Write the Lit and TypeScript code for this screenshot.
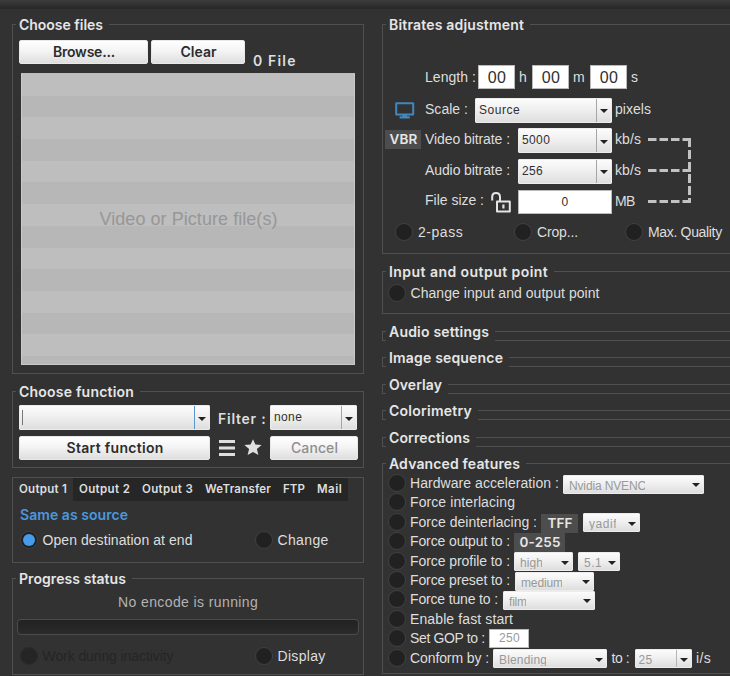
import { LitElement, html, css, svg } from "lit";
import { customElement, property } from "lit/decorators.js";

/** One line of text whose letter spacing is tuned so that it fills `w` pixels. */
@customElement("fit-label")
class FitLabel extends LitElement {
  @property({ type: Number }) w = 0;
  @property() text = "";
  static styles = css`
    :host { display: block; white-space: pre; }
    span { display: inline-block; }
  `;
  render() {
    return html`<span>${this.text}</span>`;
  }
  updated() {
    const s = this.renderRoot.querySelector("span") as HTMLElement;
    s.style.letterSpacing = "0px";
    const natural = s.getBoundingClientRect().width;
    const n = this.text.length;
    if (this.w && n > 1) s.style.letterSpacing = ((this.w + 1 - natural) / (n - 0.5)).toFixed(3) + "px";
    this.style.width = this.w + "px";
  }
}

const t = (text: string, w: number, cls = "") =>
  html`<fit-label class=${cls} .text=${text} .w=${w}></fit-label>`;

@customElement("app-root")
export class AppRoot extends LitElement {
  static styles = css`
    :host {
      display: block; width: 730px; height: 676px; overflow: hidden;
      background: #323232; color: #dedede;
      font: 14px/18px "Liberation Sans", Arial, sans-serif;
      box-sizing: border-box;
    }
    * { box-sizing: border-box; }
    .titlebar { height: 9px; background: linear-gradient(#3d3d3d, #292929); border-bottom: 1px solid #292929; }
    .main { display: grid; grid-template-columns: 352px 360px; column-gap: 18px; padding-left: 12px; height: 666px; }
    .col { display: flex; flex-direction: column; padding-top: 15px; }
    .group { border: 1px solid #505050; display: flex; flex-direction: column; flex: none; }
    .legend {
      height: 18px; margin: -9px 0 0 3px; padding: 0 7px 0 3px; align-self: flex-start;
      background: #323232; font: 600 14px/18px Inter, "Open Sans", sans-serif; color: #e6e6e6; flex: none;
    }
    .files { height: 350px; }
    .function { height: 77px; margin-top: 17px; }
    .output { height: 86px; margin-top: 9px; }
    .progress { height: 97px; margin-top: 15px; }
    .bitrates { height: 230px; }
    .points { height: 43px; margin-top: 17px; }
    .slim { height: 10px; margin-top: 16.4px; }
    .slim.first { margin-top: 17px; }
    .advanced { height: 211px; margin-top: 16.4px; }
    .row { display: grid; align-items: start; flex: none; }

    .btn {
      height: 24px; border-radius: 2px; background: linear-gradient(#fff, #f4f4f4 45%, #dedede);
      color: #2c2c2c; font: 600 14px/22px Inter, "Open Sans", sans-serif;
      display: flex; justify-content: center; border: 1px solid #e8e8e8;
    }
    .btn.off { color: #8f8f8f; font-weight: 500; }
    .inter { font-family: Inter, "Open Sans", sans-serif; font-weight: 600; }
    .combo {
      display: flex; height: 25px; border-radius: 1px; border: 1px solid #ececec;
      background: linear-gradient(#fcfcfc, #f0f0f0 45%, #dedede); color: #303030;
      font-size: 12px; line-height: 23px; padding-left: 3px;
    }
    .combo .arrow { margin-left: auto; width: 15px; display: flex; align-items: center; justify-content: center; border-left: 1px solid #a5a5a5; }
    .arrow::before { content: ""; border: 4px solid transparent; border-top: 4px solid #222; border-bottom: 0; margin-top: 2px; }
    .combo.focus .arrow { border-left-color: #5b93cb; }
    .caret { width: 1px; height: 15px; margin: 4px 0 0 -1px; background: #777; }
    .combo.small { height: 19px; line-height: 21px; color: #999; padding-left: 5px; overflow: hidden; }
    .small fit-label { height: 16px; overflow: hidden; }
    .small .arrow { border-left: 0; }
    .combo.split { padding-left: 3px; }
    .combo.split .arrow { border-left: 1px solid #b5b5b5; }
    .field { background: #fff; border: 1px solid #bbb; height: 24px; color: #303030; display: flex; justify-content: center; line-height: 23px; font-size: 16px; }
    .gop { width: 40px; height: 19px; margin: 1px 0 0 5px; color: #999; font-size: 12px; line-height: 17px; }
    .badge { background: #4d4d4d; height: 19px; display: flex; justify-content: center; font: 600 13.5px/19px Inter, sans-serif; color: #e6e6e6; }

    .radio { width: 18px; height: 18px; border-radius: 50%; background: #212121; border: 1.5px solid #414141; display: flex; align-items: center; justify-content: center; }
    .radio.on::before { content: ""; width: 12px; height: 12px; border-radius: 50%; background: #459cea; }
    .radio.dim { border-color: #2a2a2a; background: #252525; }

    .r-btns { grid-template-columns: 129px 94px 43px; column-gap: 3px; height: 29px; margin: 6px 0 0 6px; }
    .count { margin: 12px 0 0 5px; }
    .list {
      width: 334px; height: 292px; margin: 4px 0 0 8px; padding-top: 135px;
      background: repeating-linear-gradient(#bebebe 0 21.7px, #b7b7b7 21.7px 43.4px);
      border: 1px solid #c9c9c9; border-top-color: #bbb; display: flex; justify-content: center;
      color: #979797; font-size: 18px; line-height: 20px;
    }
    .r-fn { grid-template-columns: 191px 52px 87px; column-gap: 8px; margin: 4px 0 0 6px; }
    .filter { margin-top: 5px; }
    .r-fn2 { grid-template-columns: 191px 16px 18px 87px; column-gap: 9px; margin: 6px 0 0 6px; }
    .r-fn2 .off { margin-left: -1px; }
    svg { display: block; }
    .i-menu { margin-top: 4px; }
    .i-star { margin-top: 3px; }

    .tabs { display: flex; height: 23px; font: 600 11.5px/23px Inter, sans-serif; }
    .tab { padding-left: 6px; height: 23px; background: #262626; }
    .tab.active { width: 60px; background: none; }
    .tab + .tab { padding-right: 7px; }
    .same { color: #4a98de; margin: 5px 0 0 7px; }
    .r-opt { grid-template-columns: 18px 217px 18px 60px; margin-left: 6.5px; }
    .r-opt > :nth-child(2n) { margin-left: 5px; }
    .o1 { margin-top: 7px; }
    .status { color: #b2b2b2; margin: 5px 0 0 105px; }
    .bar { height: 16px; margin: 8px 4px 0 4px; border: 1px solid #4c4c4c; border-radius: 4px; background: linear-gradient(#222, #2b2b2b); }
    .o2 { margin-top: 12px; }
    .dimtext { color: #252525; }

    .body { display: grid; grid-template-columns: 264px 60px; }
    .r-len { grid-template-columns: 53px 37px 17px 37px 21px 37px 20px; margin: 31px 0 0 42px; }
    .r-len > :nth-child(odd) { padding-top: 3px; }
    .r-len > :nth-child(3), .r-len > :nth-child(5), .r-len > :nth-child(7) { padding-left: 4px; }
    .r-scale { grid-template-columns: 31px 50px 137px 40px; margin: 8.5px 0 0 11px; }
    .r-scale > :nth-child(2), .r-scale > :nth-child(4), .r-rate > .lab { padding-top: 2px; }
    .unit { padding-left: 3px; padding-top: 2px; }
    .i-mon { margin-top: 4px; }
    .r-rate { grid-template-columns: 40px 93px 94px 33px; margin: 5.7px 0 0 2px; }
    .r-rate .badge { width: 36px; margin-top: 2px; }
    .r-rate .num { font-size: 12px; }
    .sz { display: grid; grid-template-columns: 66px 27px; padding-top: 1px; }
    .links { margin-top: 6.5px; }
    .r-radio { grid-template-columns: 18px 101px 18px 93px 18px 90px; margin: 9px 0 0 12px; }
    .r-radio > :nth-child(2n) { padding-left: 5px; }
    .r-point { grid-template-columns: 18px 220px; column-gap: 5px; margin: 0 0 0 4.5px; padding-top: 3px; }
    .adv { display: flex; align-items: center; height: 19.4px; margin-left: 4.5px; }
    .adv .lead { margin-left: 4.5px; }
    .adv > * { flex: none; }
    .advlist { margin-top: 0.4px; }
  `;

  combo(text: string, w: number) {
    return html`<div class="combo">${t(text, w)}<span class="arrow"></span></div>`;
  }

  small(text: string, tw: number, w: number, gap: number, shift = 2, split = false) {
    return html`<div class="combo small ${split ? "split" : ""}"
      style="width:${w}px;margin-left:${gap}px;margin-top:${shift}px">${t(text, tw)}<span class="arrow"></span></div>`;
  }

  badge(text: string, tw: number, w: number, gap: number) {
    return html`<div class="badge" style="width:${w}px;margin-left:${gap}px;margin-top:3px">${t(text, tw)}</div>`;
  }

  adv(label: string, w: number, rest: unknown = "") {
    return html`<div class="adv"><span class="radio"></span>${t(label, w, "lead")}${rest}</div>`;
  }

  render() {
    return html`
      <div class="titlebar"></div>
      <div class="main">
        <div class="col">
          <section class="group files">
            <div class="legend">${t("Choose files", 83)}</div>
            <div class="row r-btns">
              <div class="btn">${t("Browse...", 61)}</div>
              <div class="btn">${t("Clear", 35)}</div>
              ${t("0 File", 42, "count inter")}
            </div>
            <div class="list">${t("Video or Picture file(s)", 177)}</div>
          </section>

          <section class="group function">
            <div class="legend">${t("Choose function", 114)}</div>
            <div class="row r-fn">
              <div class="combo focus"><span class="caret"></span><span class="arrow"></span></div>
              ${t("Filter :", 47, "filter inter")}
              <div class="combo" style="margin-left:-8px;width:87px">${t("none", 27)}<span class="arrow"></span></div>
            </div>
            <div class="row r-fn2">
              <div class="btn">${t("Start function", 96)}</div>
              <svg class="i-menu" width="16" height="17" viewBox="0 0 16 17">
                <path d="M0 1.5H16M0 8H16M0 14.5H16" stroke="#dedede" stroke-width="2.9" />
              </svg>
              <svg class="i-star" width="18" height="17" viewBox="0 0 18 17">
                <path d="M9 0.3L11.4 5.6L17.6 6.1L12.9 10L14.4 16L9 12.9L3.6 16L5.1 10L0.4 6.1L6.6 5.6Z" fill="#e0e0e0" />
              </svg>
              <div class="btn off">${t("Cancel", 46)}</div>
            </div>
          </section>

          <section class="group output">
            <div class="tabs">
              <div class="tab active">${t("Output 1", 47)}</div>
              <div class="tab">${t("Output 2", 50)}</div>
              <div class="tab">${t("Output 3", 50)}</div>
              <div class="tab">${t("WeTransfer", 65)}</div>
              <div class="tab">${t("FTP", 21)}</div>
              <div class="tab">${t("Mail", 24)}</div>
            </div>
            ${t("Same as source", 107, "same inter")}
            <div class="row r-opt o1">
              <span class="radio on"></span>${t("Open destination at end", 149)}
              <span class="radio"></span>${t("Change", 50)}
            </div>
          </section>

          <section class="group progress">
            <div class="legend">${t("Progress status", 106)}</div>
            ${t("No encode is running", 139, "status")}
            <div class="bar"></div>
            <div class="row r-opt o2">
              <span class="radio dim"></span>${t("Work during inactivity", 130, "dimtext")}
              <span class="radio"></span>${t("Display", 47)}
            </div>
          </section>
        </div>

        <div class="col">
          <section class="group bitrates">
            <div class="legend">${t("Bitrates adjustment", 134)}</div>
            <div class="row r-len">
              ${t("Length :", 50)}<div class="field">${t("00", 17.3)}</div>
              ${t("h", 7)}<div class="field">${t("00", 17.3)}</div>
              ${t("m", 11)}<div class="field">${t("00", 17.3)}</div>${t("s", 7)}
            </div>
            <div class="row r-scale">
              <svg class="i-mon" width="21" height="18" viewBox="0 0 21 18">
                <path d="M2.2 1.2H19.2V12.4H2.2Z" fill="none" stroke="#4287bd" stroke-width="2" stroke-linejoin="round" />
                <path d="M8.5 12.5H13V14.3H15.8V16.6H5.6V14.3H8.5Z" fill="#4287bd" />
              </svg>
              ${t("Scale :", 42)}${this.combo("Source", 40)}${t("pixels", 35, "unit")}
            </div>
            <div class="body">
              <div>
                <div class="row r-rate">
                  <div class="badge">${t("VBR", 27)}</div>${t("Video bitrate :", 84, "lab")}
                  ${this.combo("5000", 27)}${t("kb/s", 25, "unit")}
                </div>
                <div class="row r-rate">
                  <span></span>${t("Audio bitrate :", 84, "lab")}
                  ${this.combo("256", 20)}${t("kb/s", 25, "unit")}
                </div>
                <div class="row r-rate">
                  <span></span>
                  <div class="sz">${t("File size :", 58)}
                    <svg width="21" height="23" viewBox="0 0 21 23">
                      <path d="M1.2 9.5V6Q1.2 2 5 2Q9 2 9 6V10.5" fill="none" stroke="#e4e4e4" stroke-width="2" />
                      <path d="M6 10.5H18.8V20.5H6Z" fill="none" stroke="#e4e4e4" stroke-width="2" stroke-linejoin="round" />
                      <path d="M11.3 13.5H13.5V17.5H11.3Z" fill="#e4e4e4" />
                    </svg>
                  </div>
                  <div class="field num">${t("0", 7)}</div>${t("MB", 19, "unit")}
                </div>
              </div>
              <svg class="links" width="50" height="80" viewBox="0 0 50 80">
                <g fill="none" stroke="#c2c2c2" stroke-width="3">
                  ${[10.5, 41.5, 72.5].map((y) => svg`<path d="M1 ${y}H44" stroke-dasharray="8.5 3" />`)}
                  <path d="M42.5 9V74" stroke-dasharray="9 3" />
                </g>
              </svg>
            </div>
            <div class="row r-radio">
              <span class="radio"></span>${t("2-pass", 44)}
              <span class="radio"></span>${t("Crop...", 40)}
              <span class="radio"></span>${t("Max. Quality", 73)}
            </div>
          </section>

          <section class="group points">
            <div class="legend">${t("Input and output point", 158)}</div>
            <div class="row r-point"><span class="radio"></span>${t("Change input and output point", 188)}</div>
          </section>

          <section class="group slim first"><div class="legend">${t("Audio settings", 99)}</div></section>
          <section class="group slim"><div class="legend">${t("Image sequence", 113)}</div></section>
          <section class="group slim"><div class="legend">${t("Overlay", 52)}</div></section>
          <section class="group slim"><div class="legend">${t("Colorimetry", 82)}</div></section>
          <section class="group slim"><div class="legend">${t("Corrections", 80)}</div></section>

          <section class="group advanced">
            <div class="legend">${t("Advanced features", 130)}</div>
            <div class="advlist">
              ${this.adv("Hardware acceleration :", 148, this.small("Nvidia NVENC", 76, 141, 5))}
              ${this.adv("Force interlacing", 104)}
              ${this.adv("Force deinterlacing :", 126, html`${this.badge("TFF", 24, 37, 5)}${this.small("yadif", 27, 57, 5)}`)}
              ${this.adv("Force output to :", 99, this.badge("0-255", 40, 51, 5))}
              ${this.adv("Force profile to :", 99, html`${this.small("high", 22, 59, 5)}${this.small("5.1", 17, 42, 5)}`)}
              ${this.adv("Force preset to :", 99, this.small("medium", 41, 79, 6))}
              ${this.adv("Force tune to :", 87, this.small("film", 17, 92, 6))}
              ${this.adv("Enable fast start", 102)}
              ${this.adv("Set GOP to :", 74, html`<div class="field gop">${t("250", 20)}</div>`)}
              ${this.adv("Conform by :", 78, html`${this.small("Blending", 47, 114, 5)}${t("to :", 17, "lead")}${this.small("25", 13, 57, 6, 2, true)}${t("i/s", 14, "lead")}`)}
            </div>
          </section>
        </div>
      </div>
    `;
  }
}
